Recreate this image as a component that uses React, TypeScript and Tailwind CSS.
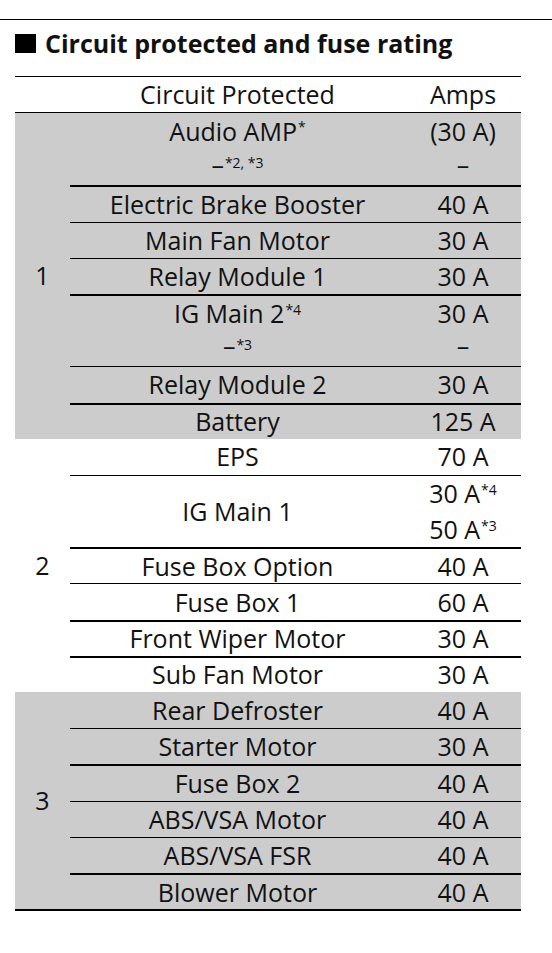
import React from "react";

type Row = { c: React.ReactNode[]; a: React.ReactNode[]; thick?: boolean };

const Sup = ({ children }: { children: React.ReactNode }) => (
  <sup className="text-[14px] top-[-0.6em] ml-[1px]">{children}</sup>
);

const Dash = () => <span className="relative top-[-3px]">–</span>;

const groups: { n: string; gray: boolean; rows: Row[] }[] = [
  {
    n: "1",
    gray: true,
    rows: [
      { c: [<>Audio AMP<Sup>*</Sup></>, <><Dash /><Sup>*2, *3</Sup></>], a: ["(30 A)", <Dash />] },
      { c: ["Electric Brake Booster"], a: ["40 A"], thick: true },
      { c: ["Main Fan Motor"], a: ["30 A"] },
      { c: ["Relay Module 1"], a: ["30 A"] },
      { c: [<>IG Main 2<Sup>*4</Sup></>, <><Dash /><Sup>*3</Sup></>], a: ["30 A", <Dash />], thick: true },
      { c: ["Relay Module 2"], a: ["30 A"] },
      { c: ["Battery"], a: ["125 A"], thick: true },
    ],
  },
  {
    n: "2",
    gray: false,
    rows: [
      { c: ["EPS"], a: ["70 A"] },
      { c: ["IG Main 1"], a: [<>30 A<Sup>*4</Sup></>, <>50 A<Sup>*3</Sup></>] },
      { c: ["Fuse Box Option"], a: ["40 A"], thick: true },
      { c: ["Fuse Box 1"], a: ["60 A"] },
      { c: ["Front Wiper Motor"], a: ["30 A"], thick: true },
      { c: ["Sub Fan Motor"], a: ["30 A"], thick: true },
    ],
  },
  {
    n: "3",
    gray: true,
    rows: [
      { c: ["Rear Defroster"], a: ["40 A"] },
      { c: ["Starter Motor"], a: ["30 A"] },
      { c: ["Fuse Box 2"], a: ["40 A"], thick: true },
      { c: ["ABS/VSA Motor"], a: ["40 A"] },
      { c: ["ABS/VSA FSR"], a: ["40 A"] },
      { c: ["Blower Motor"], a: ["40 A"], thick: true },
    ],
  },
];

const Line = ({ children }: { children: React.ReactNode }) => (
  <div className="flex-1 flex items-center justify-center whitespace-nowrap leading-none">
    <span>{children}</span>
  </div>
);

export default function App() {
  return (
    <div className="w-[552px] h-[953px] bg-white text-[#111] font-['Open_Sans',sans-serif]">
      <div className="h-[19px]" />
      <div className="border-t border-black" />
      <div className="h-[56px] flex items-center pl-[15px] gap-[9px] pb-[10px]">
        <div className="w-[21px] h-[19px] bg-black" />
        <div className="text-[25px] font-bold leading-none">Circuit protected and fuse rating</div>
      </div>
      <div className="ml-[15px] w-[506px] text-[25px]">
        <div className="h-[37px] border-y border-black grid grid-cols-[55px_335px_116px]">
          <div />
          <Line>Circuit Protected</Line>
          <Line>Amps</Line>
        </div>
        {groups.map((g) => (
          <div key={g.n} className={`flex ${g.gray ? "bg-[#cccccc]" : "bg-white"}`}>
            <div className="w-[55px] flex items-center justify-center leading-none">{g.n}</div>
            <div className="w-[451px] flex flex-col">
              {g.rows.map((r, i) => (
                <div
                  key={i}
                  className={`grid grid-cols-[335px_116px] ${
                    r.c.length > 1 || r.a.length > 1 ? "h-[72.4px]" : "h-[36.2px]"
                  } ${i === 0 ? "" : r.thick ? "border-t-2 border-black" : "border-t border-black"}`}
                >
                  <div className="flex flex-col">
                    {r.c.map((t, j) => (
                      <Line key={j}>{t}</Line>
                    ))}
                  </div>
                  <div className="flex flex-col">
                    {r.a.map((t, j) => (
                      <Line key={j}>{t}</Line>
                    ))}
                  </div>
                </div>
              ))}
            </div>
          </div>
        ))}
        <div className="border-t-2 border-black" />
      </div>
    </div>
  );
}
